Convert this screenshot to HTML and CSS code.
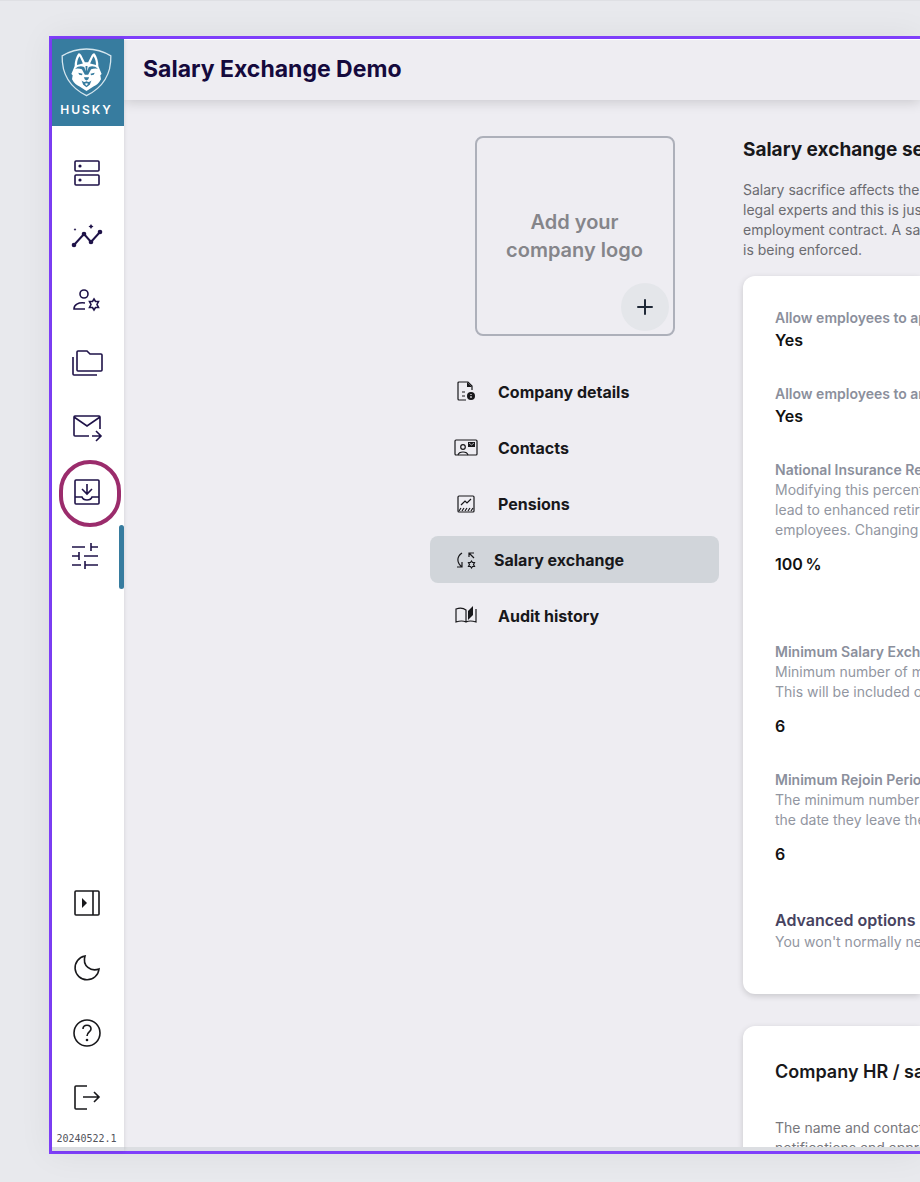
FILE: index.html
```
<!DOCTYPE html>
<html lang="en">
<head>
<meta charset="UTF-8">
<meta name="viewport" content="width=device-width, initial-scale=1.0">
<title>Salary Exchange Demo</title>
<link rel="stylesheet" href="styles.css">
</head>
<body>
<div class="app">
  <aside class="sidebar">
    <a class="logo" href="#">
      <svg viewBox="0 0 160 152" width="53" height="50" aria-hidden="true">
        <path d="M6 27 Q40 6 80 6 Q120 6 154 27 Q156 110 80 148 Q4 110 6 27Z" fill="none" stroke="#d5e6ee" stroke-width="4"/>
        <path d="M44 58 Q44 36 55 20 Q59 17 64 24 L75 46 H85 L96 24 Q101 17 105 20 Q116 36 116 58 L126 82 L122 86 L124 98 Q116 114 101 120 L80 134 L59 120 Q44 114 36 98 L38 86 L34 82Z" fill="#fff"/>
        <path d="M51 55 Q51 38 59 28 L69 50Z M109 55 Q109 38 101 28 L91 50Z" fill="#377c9f"/>
        <path d="M45 66 Q58 55 73 61 L78 74 L77 58 H83 L82 74 L87 61 Q102 55 115 66 Q103 64 94 68 L85 84 H75 L66 68 Q57 64 45 66Z" fill="#377c9f"/>
        <path d="M55 78 L68 81 L66 86 L58 84Z M105 78 L92 81 L94 86 L102 84Z M72 92 H88 L85 99 L80 102 L75 99Z" fill="#377c9f"/>
        <path d="M65 102 Q72 109 80 104 Q88 109 95 102 L90 115 L80 122 L70 115Z" fill="#377c9f"/>
        <path d="M75 112 Q80 108 85 112 L80 118Z" fill="#fff"/>
      </svg>
      <span class="logo-text">HUSKY</span>
    </a>
    <nav class="side-nav" aria-label="Main">
      <a class="side-link" href="#" aria-label="Dashboard">
        <svg class="icon" viewBox="0 0 32 32"><rect x="4" y="4" width="24" height="10" rx="1"/><rect x="4" y="18" width="24" height="10" rx="1"/><circle class="dot" cx="9" cy="9" r="1.6"/><circle class="dot" cx="9" cy="23" r="1.6"/></svg>
      </a>
      <a class="side-link" href="#" aria-label="Insights">
        <svg class="icon" viewBox="0 0 32 32"><path d="M3 24 13 13l7 8 9-10" stroke-width="2"/><circle class="dot" cx="3" cy="24" r="2.3"/><circle class="dot" cx="13" cy="13" r="2.3"/><circle class="dot" cx="20" cy="21" r="2.3"/><circle class="dot" cx="29" cy="11" r="2.3"/><path class="dot" d="m20 3 .9 1.600 1.600.9-1.600.9L20 8l-.9-1.600-1.600-.9 1.600-.9zM4 7l.5 1 .9.500-.9.500L4 10l-.5-1-.9-.5.9-.5z"/></svg>
      </a>
      <a class="side-link" href="#" aria-label="Manage users">
        <svg class="icon" viewBox="0 0 32 32"><circle cx="13" cy="9" r="4"/><path d="M14 18C7 17 3 20 3 24h11"/><path d="m23 14 1.500 2.500h3L26 19.500l1.500 3h-3L23 25l-1.500-2.500h-3l1.500-3-1.500-3h3z"/></svg>
      </a>
      <a class="side-link" href="#" aria-label="Documents">
        <svg class="icon" viewBox="0 0 32 32"><path d="M7 2h9l3 3h11q1 0 1 1v15q0 1-1 1H7q-1 0-1-1V3q0-1 1-1zM2 8v17q0 1 1 1h23"/></svg>
      </a>
      <a class="side-link" href="#" aria-label="Send mail">
        <svg class="icon" viewBox="0 0 32 32"><path d="M18 23H4q-1 0-1-1V4q0-1 1-1h24q1 0 1 1v12M3 4l13 9L29 4M21 23h9m-5-5 5 5-5 5"/></svg>
      </a>
      <a class="side-link marked" href="#" aria-label="Downloads">
        <svg class="icon" viewBox="0 0 32 32"><rect x="4" y="3" width="24" height="24" rx="1"/><path d="M16 7v9m-5-4 5 5 5-5M4 20h7q1 3 5 3t5-3h7"/></svg>
      </a>
      <a class="side-link active" href="#" aria-label="Settings" aria-current="page">
        <svg class="icon" viewBox="0 0 32 32"><path d="M1 6h13M20 2v8M20 6h7M1 15h7M8 11v8M13 15h14M1 24h9M14 20v8M14 24h13"/></svg>
      </a>
    </nav>
    <div class="side-tools">
      <button class="side-button" type="button" aria-label="Expand menu">
        <svg class="icon" viewBox="0 0 32 32"><rect x="4" y="4" width="24" height="24" rx="1"/><path d="M22 4v24"/><path class="dot" d="m11 11 5 5-5 5z"/></svg>
      </button>
      <button class="side-button" type="button" aria-label="Dark mode">
        <svg class="icon" viewBox="0 0 32 32"><path d="M14 4A12 12 0 1 0 28 17C20 20 11 14 14 4z"/></svg>
      </button>
      <button class="side-button" type="button" aria-label="Help">
        <svg class="icon" viewBox="0 0 32 32"><circle cx="16" cy="16" r="13"/><path d="M12 12c0-5 8-5 8 0 0 3-4 3-4 7"/><circle class="dot" cx="16" cy="23" r="1.300"/></svg>
      </button>
      <button class="side-button" type="button" aria-label="Log out">
        <svg class="icon" viewBox="0 0 32 32"><path d="M16 4H5q-1 0-1 1v21q0 1 1 1h11M12 15h16m-5-5 5 5-5 5"/></svg>
      </button>
    </div>
    <small class="version">20240522.1</small>
  </aside>

  <div class="page">
    <header class="topbar">
      <h1>Salary Exchange Demo</h1>
    </header>
    <main class="content">
      <div class="company">
        <div class="logo-box">
          <p>Add your<br>company logo</p>
          <button class="add-logo" type="button" aria-label="Add logo">
            <svg viewBox="0 0 18 18" width="18" height="18"><path d="M9 2v14M2 9h14" stroke="#1f2937" stroke-width="2" stroke-linecap="round"/></svg>
          </button>
        </div>
        <nav class="menu" aria-label="Company settings">
          <a href="#">
            <svg class="menu-icon" viewBox="0 0 24 24"><path d="M12 20H5q-1 0-1-1V3q0-1 1-1h9l4 4v4M8 12h3M8 16h3"/><path class="dot" d="M13 2v5h5z"/><circle class="dot" cx="17" cy="16" r="4"/><path d="M17 14v1M17 16v2" stroke="#eeedf2"/></svg>
            Company details
          </a>
          <a href="#">
            <svg class="menu-icon" viewBox="0 0 24 24"><rect x="1" y="4" width="22" height="15" rx="1"/><circle cx="9" cy="11" r="2.300"/><path d="M4 19c1-4 9-4 10 0"/><path class="dot" d="M14 6h7v5h-7z"/><path d="m15 7 2.500 2L20 7" stroke="#eeedf2" stroke-width=".7"/></svg>
            Contacts
          </a>
          <a href="#">
            <svg class="menu-icon" viewBox="0 0 24 24"><rect x="4" y="4" width="16" height="16" rx="1"/><path d="m7 13 4-4 2 2 4-4M5 19l2-3M8 19l2-3M11 19l2-3M14 19l2-3M17 19l2-3"/></svg>
            Pensions
          </a>
          <a class="selected" href="#" aria-current="page">
            <svg class="menu-icon" viewBox="0 0 24 24"><path d="M8 5C2 9 3 15 8 19M8 14v5H3M15 9V5h5M15 5l5 5"/><path d="m17.500 13 1 1.500h2l-1 2 1 2h-2l-1 1.500-1-1.500h-2l1-2-1-2h2z"/></svg>
            Salary exchange
          </a>
          <a href="#">
            <svg class="menu-icon" viewBox="0 0 24 24"><path d="M12 18V6Q8 3 2 5v13q6-2 10 0 4-2 10 0V5"/><path class="dot" d="m14 7 5-5v9l-5 5z"/></svg>
            Audit history
          </a>
        </nav>
      </div>

      <div class="settings">
        <h2>Salary exchange settings</h2>
        <p class="intro">Salary sacrifice affects the employee<br>legal experts and this is just<br>employment contract. A salary<br>is being enforced.</p>
        <section class="card">
          <dl>
            <div class="field">
              <dt>Allow employees to apply</dt>
              <dd class="value">Yes</dd>
            </div>
            <div class="field">
              <dt>Allow employees to amend</dt>
              <dd class="value">Yes</dd>
            </div>
            <div class="field rebate">
              <dt>National Insurance Rebate</dt>
              <dd>Modifying this percentage<br>lead to enhanced retirement<br>employees. Changing this</dd>
              <dd class="value spaced">100&thinsp;%</dd>
            </div>
            <div class="field">
              <dt>Minimum Salary Exchange</dt>
              <dd>Minimum number of months<br>This will be included on</dd>
              <dd class="value spaced">6</dd>
            </div>
            <div class="field">
              <dt>Minimum Rejoin Period</dt>
              <dd>The minimum number of<br>the date they leave the</dd>
              <dd class="value spaced">6</dd>
            </div>
          </dl>
          <h3>Advanced options</h3>
          <p class="hint">You won't normally need</p>
        </section>
        <section class="card contact">
          <h2>Company HR / salary</h2>
          <p>The name and contact<br>notifications and approvals</p>
        </section>
      </div>
    </main>
  </div>
</div>
</body>
</html>
```
FILE: styles.css
```
*, *::after {
  box-sizing: border-box;
}
body {
  margin: 0;
  height: 100vh;
  padding: 36px 0 28px 49px;
  overflow: hidden;
  background: #e8e9ed;
  box-shadow: inset 0 1px #dfe0e4;
  font-family: Inter, sans-serif;
  font-size: 14px;
  line-height: 20px;
  color: #18181b;
}
h1, h2, h3, p, dl, dd {
  margin: 0;
}
a {
  color: inherit;
  text-decoration: none;
}
button {
  border: 0;
  padding: 0;
  color: inherit;
  cursor: pointer;
}
.app {
  display: flex;
  height: 100%;
  border: 3px solid #7f3ffb;
  border-right: 0;
  background: #eeedf2;
  box-shadow: 0 0 32px rgba(0, 0, 0, 0.06);
}

/* sidebar */
.sidebar {
  display: flex;
  flex-direction: column;
  flex: none;
  width: 72px;
  background: #fff;
  border-bottom: 4px solid #dcdee2;
  box-shadow: 0 0 4px rgba(0, 0, 0, 0.12);
  z-index: 2;
}
.logo {
  display: flex;
  flex-direction: column;
  align-items: center;
  height: 87px;
  padding: 8px 3px 0 0;
  background: #377c9f;
}
.logo-text {
  margin-top: 4px;
  color: #fff;
  font-size: 12px;
  font-weight: 600;
  line-height: 18px;
  letter-spacing: 2px;
}
.side-nav {
  padding-top: 15px;
  color: #1e1248;
}
.side-link, .side-button {
  display: flex;
  align-items: center;
  justify-content: center;
  width: 100%;
  height: 64px;
  padding-right: 3px;
  position: relative;
  background: none;
}
.side-button {
  height: 65px;
}
.icon {
  width: 32px;
  height: 32px;
  fill: none;
  stroke: currentColor;
  stroke-width: 1.6;
}
.dot {
  fill: currentColor;
  stroke: none;
}
.marked::after {
  content: "";
  position: absolute;
  left: 7px;
  top: -1px;
  width: 62px;
  height: 67px;
  border: 4px solid #9b2c6c;
  border-radius: 31px;
}
.active::after {
  content: "";
  position: absolute;
  right: 0;
  top: 0;
  width: 5px;
  height: 64px;
  border-radius: 4px;
  background: #377c9f;
}
.side-tools {
  margin-top: auto;
}
.version {
  padding: 2px 3px 1px 0;
  color: #52525b;
  font-family: "DejaVu Sans Mono", monospace;
  font-size: 10px;
  line-height: 14px;
  text-align: center;
}

/* page */
.page {
  display: flex;
  flex-direction: column;
  flex: 1;
  min-width: 0;
  overflow: hidden;
  border-bottom: 4px solid #dcdee2;
}
.topbar {
  flex: none;
  padding: 13px 19px 15px;
  border-top: 1px solid #fff;
  box-shadow: 0 2px 12px rgba(0, 0, 0, 0.16);
}
.topbar h1 {
  color: #150a3d;
  font-size: 23px;
  font-weight: 700;
  line-height: 32px;
}
.content {
  display: flex;
  gap: 24px;
  flex: 1;
  min-height: 0;
  padding: 36px 0 0 306px;
}
.company {
  flex: none;
  width: 289px;
}
.logo-box {
  display: flex;
  align-items: center;
  justify-content: center;
  width: 200px;
  height: 200px;
  margin: 0 auto 32px;
  position: relative;
  border: 2px solid #adb0ba;
  border-radius: 8px;
  color: #85858a;
  font-size: 20px;
  font-weight: 600;
  line-height: 28px;
  text-align: center;
}
.add-logo {
  display: flex;
  align-items: center;
  justify-content: center;
  position: absolute;
  right: 4px;
  bottom: 3px;
  width: 48px;
  height: 48px;
  border-radius: 50%;
  background: #e4e6ea;
}
.menu {
  display: flex;
  flex-direction: column;
  gap: 9px;
}
.menu a {
  display: flex;
  align-items: center;
  gap: 20px;
  height: 47px;
  padding-left: 24px;
  border-radius: 8px;
  font-size: 16px;
  font-weight: 700;
}
.menu .selected {
  gap: 16px;
  background: #d1d5da;
}
.menu-icon {
  width: 24px;
  height: 24px;
  fill: none;
  stroke: currentColor;
  stroke-width: 1.2;
}

/* settings */
.settings {
  flex: 1;
  min-width: 0;
  white-space: nowrap;
}
.settings h2 {
  font-size: 19px;
  font-weight: 700;
  line-height: 28px;
}
.intro {
  margin: 16px 0;
  color: #6b6b70;
}
.card {
  margin-bottom: 32px;
  padding: 32px 0 42px 32px;
  border-radius: 12px 0 0 12px;
  background: #fff;
  box-shadow: 0 2px 6px rgba(0, 0, 0, 0.16);
}
.field {
  margin-bottom: 32px;
}
.field dt {
  color: #8b8f9c;
  font-weight: 600;
}
.field dd, .hint {
  color: #9296a1;
}
.field .value {
  color: #111;
  font-size: 16px;
  font-weight: 600;
  line-height: 24px;
}
.field .spaced {
  margin-top: 12px;
}
.rebate {
  margin-bottom: 66px;
}
.card h3 {
  margin-top: 42px;
  color: #474360;
  font-size: 16px;
  font-weight: 600;
  line-height: 24px;
}
.settings .contact h2 {
  margin-bottom: 32px;
  font-size: 18px;
  font-weight: 600;
}
.contact p {
  color: #77777c;
}
```
